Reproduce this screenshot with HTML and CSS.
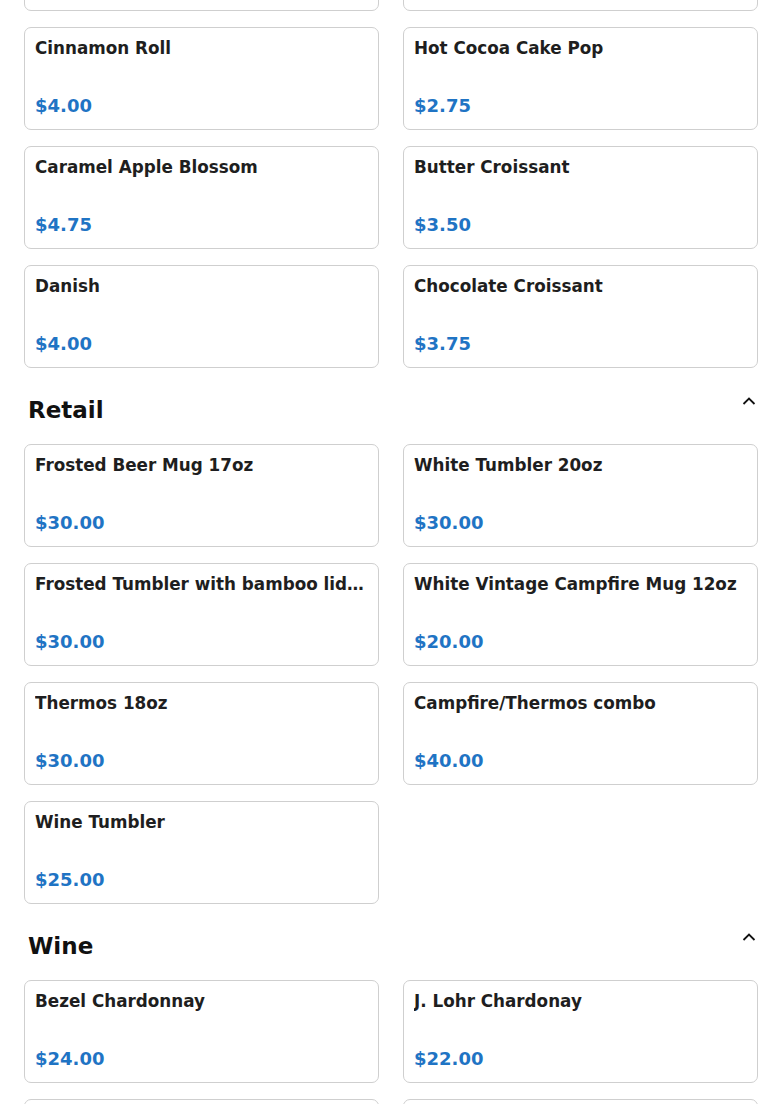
FILE: index.html
```html
<!DOCTYPE html>
<html lang="en">
<head>
<meta charset="utf-8">
<title>Menu</title>
<link rel="stylesheet" href="styles.css">
</head>
<body>
<main class="menu">
  <section class="section section-first">
    <div class="grid">
      <div class="card card-empty"></div>
      <div class="card card-empty"></div>
      <div class="card"><div class="name">Cinnamon Roll</div><div class="price">$4.00</div></div>
      <div class="card"><div class="name">Hot Cocoa Cake Pop</div><div class="price">$2.75</div></div>
      <div class="card"><div class="name">Caramel Apple Blossom</div><div class="price">$4.75</div></div>
      <div class="card"><div class="name">Butter Croissant</div><div class="price">$3.50</div></div>
      <div class="card"><div class="name">Danish</div><div class="price">$4.00</div></div>
      <div class="card"><div class="name">Chocolate Croissant</div><div class="price">$3.75</div></div>
    </div>
  </section>

  <section class="section">
    <div class="section-head">
      <h2 class="section-title">Retail</h2>
      <svg class="chev" width="16" height="10" viewBox="0 0 16 10"><polyline points="2.5,8 8,2.5 13.5,8" fill="none" stroke="#111" stroke-width="1.8"/></svg>
    </div>
    <div class="grid">
      <div class="card"><div class="name">Frosted Beer Mug 17oz</div><div class="price">$30.00</div></div>
      <div class="card"><div class="name">White Tumbler 20oz</div><div class="price">$30.00</div></div>
      <div class="card"><div class="name">Frosted Tumbler with bamboo lid and straw</div><div class="price">$30.00</div></div>
      <div class="card"><div class="name">White Vintage Campfire Mug 12oz</div><div class="price">$20.00</div></div>
      <div class="card"><div class="name">Thermos 18oz</div><div class="price">$30.00</div></div>
      <div class="card"><div class="name">Campfire/Thermos combo</div><div class="price">$40.00</div></div>
      <div class="card"><div class="name">Wine Tumbler</div><div class="price">$25.00</div></div>
    </div>
  </section>

  <section class="section">
    <div class="section-head">
      <h2 class="section-title">Wine</h2>
      <svg class="chev" width="16" height="10" viewBox="0 0 16 10"><polyline points="2.5,8 8,2.5 13.5,8" fill="none" stroke="#111" stroke-width="1.8"/></svg>
    </div>
    <div class="grid">
      <div class="card"><div class="name">Bezel Chardonnay</div><div class="price">$24.00</div></div>
      <div class="card"><div class="name">J. Lohr Chardonay</div><div class="price">$22.00</div></div>
      <div class="card card-empty"></div>
      <div class="card card-empty"></div>
    </div>
  </section>
</main>
</body>
</html>
```

FILE: styles.css
```css
html, body {
  margin: 0;
  padding: 0;
  background: #ffffff;
  overflow: hidden;
}

body {
  font-family: "DejaVu Sans", "Liberation Sans", sans-serif;
  color: #1c1c1e;
}

.menu {
  padding: 0 24px;
  margin-top: -92px;
}

.grid {
  display: grid;
  grid-template-columns: 1fr 1fr;
  column-gap: 24px;
  row-gap: 16px;
}

.card {
  box-sizing: border-box;
  height: 103px;
  border: 1px solid #cfcfcf;
  border-radius: 7px;
  background: #fff;
  padding: 10px 10px 13px 10px;
  display: flex;
  flex-direction: column;
  justify-content: space-between;
  min-width: 0;
}

.name {
  font-size: 16.8px;
  font-weight: bold;
  line-height: normal;
  color: #1e1e20;
  white-space: nowrap;
  overflow: hidden;
  text-overflow: ellipsis;
}

.price {
  font-size: 18px;
  font-weight: bold;
  line-height: normal;
  color: #1f74c4;
}

.section-head {
  display: flex;
  justify-content: space-between;
  align-items: flex-start;
  padding: 29px 1px 0 4px;
  margin-bottom: 21px;
}

.section-title {
  margin: 0;
  font-size: 23px;
  font-weight: bold;
  line-height: normal;
  color: #111;
}

.chev {
  display: block;
  margin-top: -1px;
}
```
